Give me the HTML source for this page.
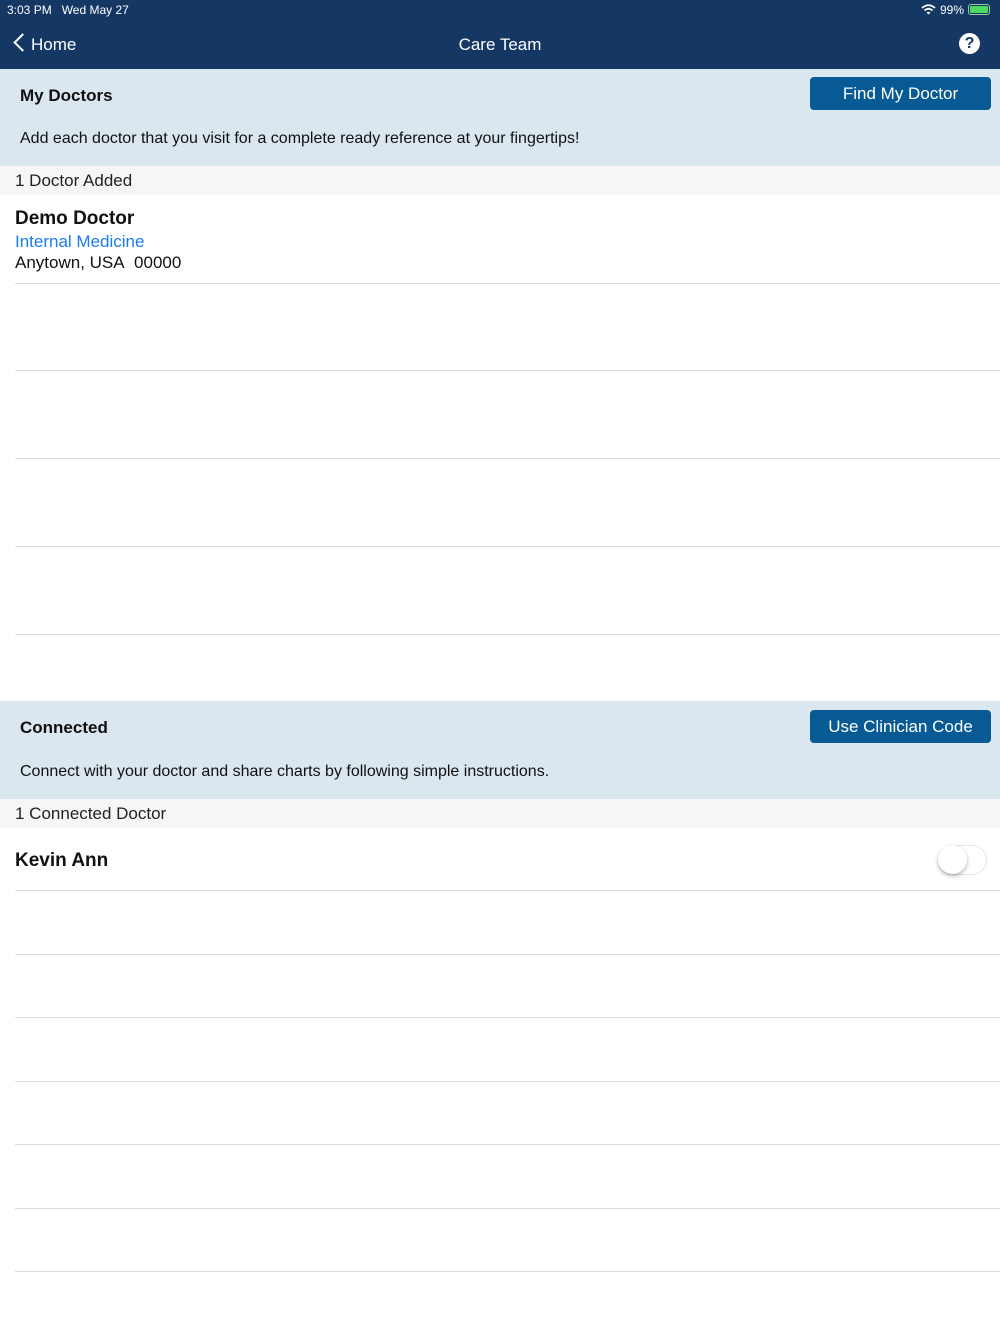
<!DOCTYPE html>
<html><head><meta charset="utf-8"><style>
*{margin:0;padding:0;box-sizing:border-box}
body{width:1000px;height:1334px;background:#fff;font-family:"Liberation Sans",sans-serif;position:relative;overflow:hidden;color:#111}
.abs{position:absolute}
.nav{left:0;top:0;width:1000px;height:69px;background:#143763;color:#fff}
.band{left:0;width:1000px;background:#dae7ef}
.btn{background:#075a93;color:#fff;border-radius:4px;font-size:17px;text-align:center;line-height:33px;width:181px;height:33px;left:810px}
.sub{left:0;width:1000px;background:#f6f6f6;font-size:17px;padding-left:15px;color:#222}
.line{left:15px;width:985px;height:1px;background:#ddd}
</style></head><body>
<div class="abs nav">
<div class="abs" style="left:7px;top:3px;font-size:12px">3:03 PM&nbsp;&nbsp;&nbsp;Wed May 27</div>
<svg class="abs" style="left:921px;top:4px" width="15" height="11" viewBox="0 0 15 11"><path d="M1 4 Q7.5 -1.5 14 4" stroke="#fff" stroke-width="1.8" fill="none"/><path d="M3.5 6.5 Q7.5 3 11.5 6.5" stroke="#fff" stroke-width="1.8" fill="none"/><path d="M5.5 8.5 L7.5 10.5 L9.5 8.5 Q7.5 7 5.5 8.5Z" fill="#fff"/></svg>
<div class="abs" style="left:940px;top:3px;font-size:12px">99%</div>
<div class="abs" style="left:968px;top:4px;width:22px;height:11px;border:1px solid #9c9;border-radius:3px;padding:1px"><div style="width:100%;height:100%;background:#4cd964;border-radius:1px"></div></div>
<div class="abs" style="left:16px;top:36px;width:13px;height:13px;border-left:2.5px solid #fff;border-bottom:2.5px solid #fff;transform:rotate(45deg)"></div>
<div class="abs" style="left:31px;top:35px;font-size:17px">Home</div>
<div class="abs" style="left:0;width:1000px;text-align:center;top:35px;font-size:17px">Care Team</div>
<div class="abs" style="left:959px;top:33px;width:21px;height:21px;border-radius:50%;background:#fff;color:#143763;font-weight:bold;font-size:16px;text-align:center;line-height:21px">?</div>
</div>
<div class="abs band" style="top:69px;height:97px"></div>
<div class="abs" style="left:20px;top:86px;font-size:17px;font-weight:bold">My Doctors</div>
<div class="abs btn" style="top:77px">Find My Doctor</div>
<div class="abs" style="left:20px;top:130px;font-size:16px">Add each doctor that you visit for a complete ready reference at your fingertips!</div>
<div class="abs sub" style="top:166px;height:29px;line-height:30px">1 Doctor Added</div>
<div class="abs" style="left:15px;top:208px;font-size:19px;font-weight:bold">Demo Doctor</div>
<div class="abs" style="left:15px;top:232px;font-size:17px;color:#1a7cf0">Internal Medicine</div>
<div class="abs" style="left:15px;top:253px;font-size:17px">Anytown, USA&nbsp;&nbsp;00000</div>
<div class="abs line" style="top:283px"></div>
<div class="abs line" style="top:370px"></div>
<div class="abs line" style="top:458px"></div>
<div class="abs line" style="top:546px"></div>
<div class="abs line" style="top:634px"></div>
<div class="abs band" style="top:701px;height:98px"></div>
<div class="abs" style="left:20px;top:718px;font-size:17px;font-weight:bold">Connected</div>
<div class="abs btn" style="top:710px">Use Clinician Code</div>
<div class="abs" style="left:20px;top:763px;font-size:16px">Connect with your doctor and share charts by following simple instructions.</div>
<div class="abs sub" style="top:799px;height:29px;line-height:30px">1 Connected Doctor</div>
<div class="abs" style="left:15px;top:850px;font-size:19px;font-weight:bold">Kevin Ann</div>
<div class="abs" style="left:938px;top:845px;width:49px;height:30px;border-radius:15px;border:1.5px solid #e5e5e5;background:#fff"></div>
<div class="abs" style="left:938px;top:845px;width:29px;height:29px;border-radius:50%;background:#fff;box-shadow:0 2px 4px rgba(0,0,0,.3)"></div>
<div class="abs line" style="top:890px"></div>
<div class="abs line" style="top:954px"></div>
<div class="abs line" style="top:1017px"></div>
<div class="abs line" style="top:1081px"></div>
<div class="abs line" style="top:1144px"></div>
<div class="abs line" style="top:1208px"></div>
<div class="abs line" style="top:1271px"></div>
</body></html>
